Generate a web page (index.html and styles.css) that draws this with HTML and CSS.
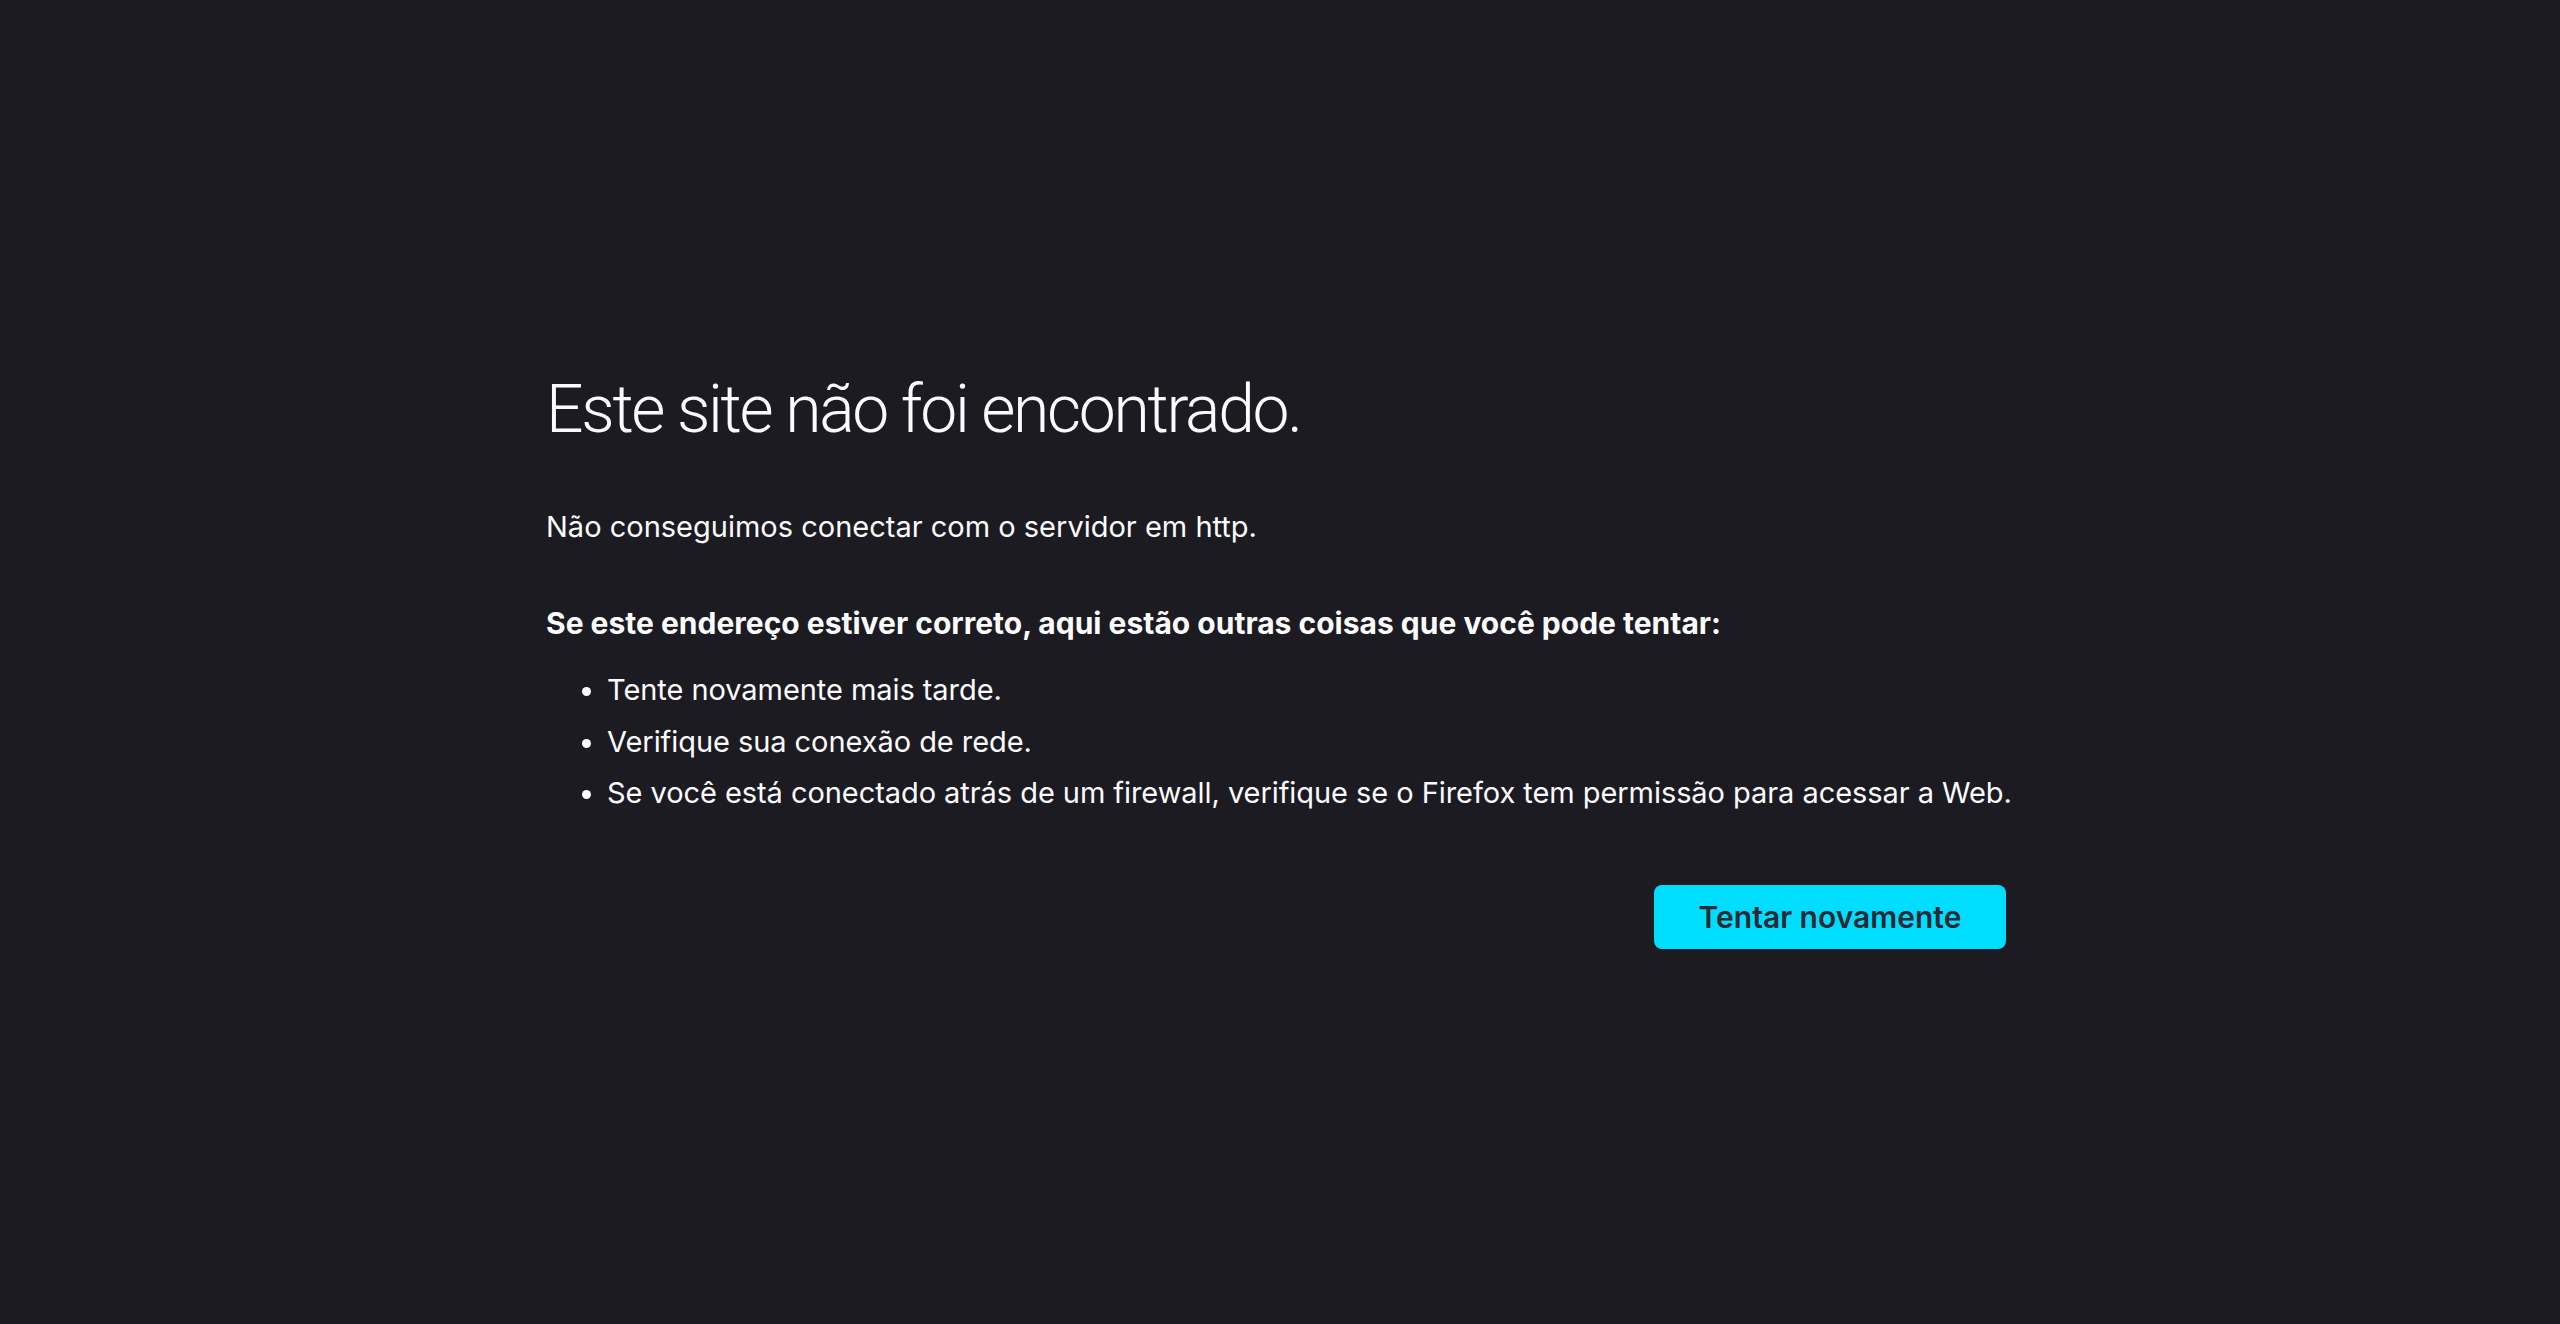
FILE: index.html
```html
<!DOCTYPE html>
<html lang="pt-BR">
<head>
<meta charset="utf-8">
<title>Problema ao carregar a página</title>
<link rel="stylesheet" href="styles.css">
</head>
<body>
<main class="container">
  <h1 class="title">Este site não foi encontrado.</h1>
  <p class="intro">Não conseguimos conectar com o servidor em http.</p>
  <p class="hint">Se este endereço estiver correto, aqui estão outras coisas que você pode tentar:</p>
  <ul class="tips">
    <li>Tente novamente mais tarde.</li>
    <li>Verifique sua conexão de rede.</li>
    <li>Se você está conectado atrás de um firewall, verifique se o Firefox tem permissão para acessar a Web.</li>
  </ul>
  <div class="actions">
    <button class="retry" type="button">Tentar novamente</button>
  </div>
</main>
</body>
</html>
```

FILE: styles.css
```css
html, body {
  margin: 0;
  padding: 0;
  background: #1c1b22;
  color: #fbfbfe;
  font-family: Inter, "Noto Sans", sans-serif;
}
body {
  min-height: 1324px;
  padding-left: 546px;
  padding-top: 370px;
  box-sizing: border-box;
}
.container {
  width: 1490px;
  display: flex;
  flex-direction: column;
}
.title {
  margin: 0;
  font-family: Roboto, Inter, sans-serif;
  font-size: 66px;
  line-height: 80px;
  font-weight: 300;
  letter-spacing: -2.3px;
}
.intro {
  margin: 59px 0 0;
  font-size: 29px;
  line-height: 36px;
}
.hint {
  margin: 60px 0 0;
  font-size: 30px;
  line-height: 36px;
  font-weight: 700;
}
.tips {
  margin: 31px 0 0;
  padding-left: 61px;
  font-size: 29px;
  line-height: 36px;
  letter-spacing: -0.06px;
}
.tips li + li {
  margin-top: 15.7px;
}
.actions {
  display: flex;
  justify-content: flex-end;
  margin-top: 74px;
  padding-right: 30px;
}
.retry {
  width: 352px;
  height: 64px;
  border: 0;
  border-radius: 8px;
  background: #00ddff;
  color: #2b2a33;
  font-family: Inter, "Noto Sans", sans-serif;
  font-size: 30px;
  font-weight: 600;
  padding: 0;
}
```
